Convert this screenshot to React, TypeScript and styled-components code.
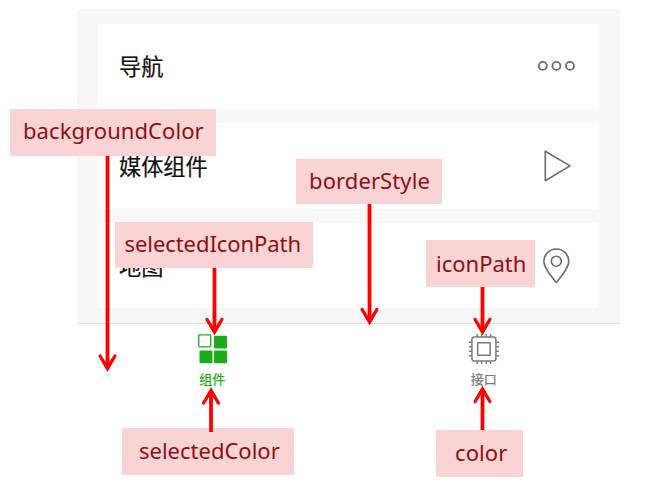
import React from "react";
import styled, { createGlobalStyle } from "styled-components";

const GlobalStyle = createGlobalStyle`
  body { margin: 0; background: #fff; }
  * { box-sizing: border-box; }
`;

const Stage = styled.main`
  position: relative;
  width: 645px;
  height: 480px;
  overflow: hidden;
  padding: 8.5px 25px 0 77px;
  background: #fff;
  font-family: "Noto Sans CJK SC", sans-serif;
`;

const Phone = styled.section`
  width: 543px;
`;

const List = styled.div`
  display: flex;
  flex-direction: column;
  gap: 14.5px;
  height: 315.5px;
  padding: 15px 21px 0;
  background: #f7f7f7;
  border-bottom: 1px solid #dedede;
`;

const Card = styled.div`
  display: flex;
  align-items: center;
  justify-content: space-between;
  height: 85.3px;
  padding: 0 21px;
  border-radius: 3px;
  background: #fff;
`;

const CardTitle = styled.span`
  padding-bottom: 2.4px;
  font-size: 22.2px;
  line-height: 32px;
  color: #111;
  -webkit-text-stroke: 0.2px #111;
`;

const CardIcon = styled.svg`
  width: 44px;
  height: 44px;
  fill: none;
  stroke: #6a6a6a;
  stroke-width: 1.6;
  stroke-linejoin: round;
`;

const TabBar = styled.nav`
  display: grid;
  grid-template-columns: 1fr 1fr;
  padding-top: 8px;
`;

const Tab = styled.div<{ $color: string }>`
  display: flex;
  flex-direction: column;
  align-items: center;
  color: ${(p) => p.$color};
`;

const TabIcon = styled.svg`
  width: 34px;
  height: 34px;
`;

const TabLabel = styled.span`
  margin: 2.5px 1px 0 0;
  font-size: 13px;
  line-height: 20px;
  -webkit-text-stroke: 0.25px currentColor;
`;

interface CalloutBox {
  $x: number;
  $y: number;
  $w: number;
  $h: number;
  $inset: number;
  $spacing: number;
  $line: number;
}

const Callout = styled.div<CalloutBox>`
  position: absolute;
  left: ${(p) => p.$x}px;
  top: ${(p) => p.$y}px;
  width: ${(p) => p.$w}px;
  height: ${(p) => p.$h}px;
  padding-left: ${(p) => p.$inset}px;
  background: #fad3d4;
  color: #8c1013;
  font-family: "Noto Sans", sans-serif;
  font-size: 22px;
  line-height: ${(p) => p.$line}px;
  letter-spacing: ${(p) => p.$spacing}px;
  white-space: nowrap;
`;

const ArrowLayer = styled.svg`
  position: absolute;
  left: 0;
  top: 0;
  width: 645px;
  height: 480px;
  fill: none;
  stroke: #fe0000;
  pointer-events: none;
`;

const callouts = [
  { text: "backgroundColor", x: 9.5, y: 109, w: 206.5, h: 47, inset: 13.5, spacing: 0.07, line: 42 },
  { text: "borderStyle", x: 295.5, y: 158.5, w: 146.5, h: 45.5, inset: 13.5, spacing: 0.1, line: 42 },
  { text: "selectedIconPath", x: 114.5, y: 222, w: 198, h: 46, inset: 10, spacing: -0.07, line: 42 },
  { text: "iconPath", x: 425.5, y: 240, w: 109.5, h: 47, inset: 10.5, spacing: 0, line: 46 },
  { text: "selectedColor", x: 121.5, y: 428, w: 172.5, h: 46.5, inset: 17.5, spacing: 0, line: 44 },
  { text: "color", x: 436, y: 430, w: 87, h: 47, inset: 19, spacing: 0.1, line: 44 },
];

const arrows = [
  { x: 107.5, from: 156, to: 371.5 },
  { x: 369.5, from: 204, to: 325 },
  { x: 214.5, from: 268, to: 335 },
  { x: 482.5, from: 287, to: 335 },
  { x: 211, from: 432, to: 387.5 },
  { x: 482.5, from: 430, to: 386 },
];

function Arrow({ x, from, to }: { x: number; from: number; to: number }) {
  const d = to > from ? -1 : 1;
  return (
    <g>
      <path d={`M${x} ${from}V${to + 6 * d}`} strokeWidth="3.8" />
      <path d={`M${x - 7.4} ${to + 15.5 * d}L${x} ${to + 3.2 * d}L${x + 7.4} ${to + 15.5 * d}`} strokeWidth="3.3" strokeLinecap="round" />
      <path d={`M${x} ${to}L${x - 5} ${to + 8.5 * d}H${x + 5}Z`} fill="#fe0000" stroke="none" />
    </g>
  );
}

const pins = [10.4, 14.9, 19.4, 23.9];

export default function App() {
  return (
    <Stage>
      <GlobalStyle />
      <Phone>
        <List>
          <Card>
            <CardTitle>导航</CardTitle>
            <CardIcon viewBox="0 0 44 44">
              <g strokeWidth="1.8">
                <circle cx="8.8" cy="21.9" r="4" />
                <circle cx="22.4" cy="21.9" r="4" />
                <circle cx="36" cy="21.9" r="4" />
              </g>
            </CardIcon>
          </Card>
          <Card>
            <CardTitle>媒体组件</CardTitle>
            <CardIcon viewBox="0 0 44 44">
              <path d="M11.3 7.2V36.8L36 21.9Z" />
            </CardIcon>
          </Card>
          <Card>
            <CardTitle>地图</CardTitle>
            <CardIcon viewBox="0 0 44 44">
              <path d="M22.3 38.5C18 32.8 9.8 24.5 9.8 17.2A12.5 12.2 0 0 1 34.8 17.2C34.8 24.5 26.6 32.8 22.3 38.5Z" />
              <circle cx="22.3" cy="17.2" r="5" />
            </CardIcon>
          </Card>
        </List>
        <TabBar>
          <Tab $color="#1aad19">
            <TabIcon viewBox="0 0 34 34">
              <rect x="2.7" y="2.9" width="12" height="12" rx=".8" fill="none" stroke="currentColor" strokeWidth="1.3" />
              <path fill="currentColor" d="M19 3.7H30Q31 3.7 31 4.7V15.5Q31 16.5 30 16.5H19Q18 16.5 18 15.5V4.7Q18 3.7 19 3.7ZM4.5 18.4H15.5Q16.5 18.4 16.5 19.4V30.2Q16.5 31.2 15.5 31.2H4.5Q3.5 31.2 3.5 30.2V19.4Q3.5 18.4 4.5 18.4ZM19 18.4H30Q31 18.4 31 19.4V30.2Q31 31.2 30 31.2H19Q18 31.2 18 30.2V19.4Q18 18.4 19 18.4Z" />
            </TabIcon>
            <TabLabel>组件</TabLabel>
          </Tab>
          <Tab $color="#777a7d">
            <TabIcon viewBox="0 0 34 34" fill="none" stroke="currentColor" strokeWidth="1.5">
              <rect x="4.9" y="5" width="24" height="24" rx="2.5" />
              <rect x="10.7" y="10.8" width="12.4" height="12.4" rx=".5" />
              {pins.map((p) => (
                <path key={p} d={`M${p - 0.3} 2V4.8M${p - 0.3} 29.3V32.1M1.9 ${p - 0.2}H4.7M29.2 ${p - 0.2}H32`} />
              ))}
            </TabIcon>
            <TabLabel>接口</TabLabel>
          </Tab>
        </TabBar>
      </Phone>
      {callouts.map((c) => (
        <Callout
          key={c.text}
          $x={c.x}
          $y={c.y}
          $w={c.w}
          $h={c.h}
          $inset={c.inset}
          $spacing={c.spacing}
          $line={c.line}
        >
          {c.text}
        </Callout>
      ))}
      <ArrowLayer viewBox="0 0 645 480">
        {arrows.map((a) => (
          <Arrow key={`${a.x}-${a.to}`} {...a} />
        ))}
      </ArrowLayer>
    </Stage>
  );
}
